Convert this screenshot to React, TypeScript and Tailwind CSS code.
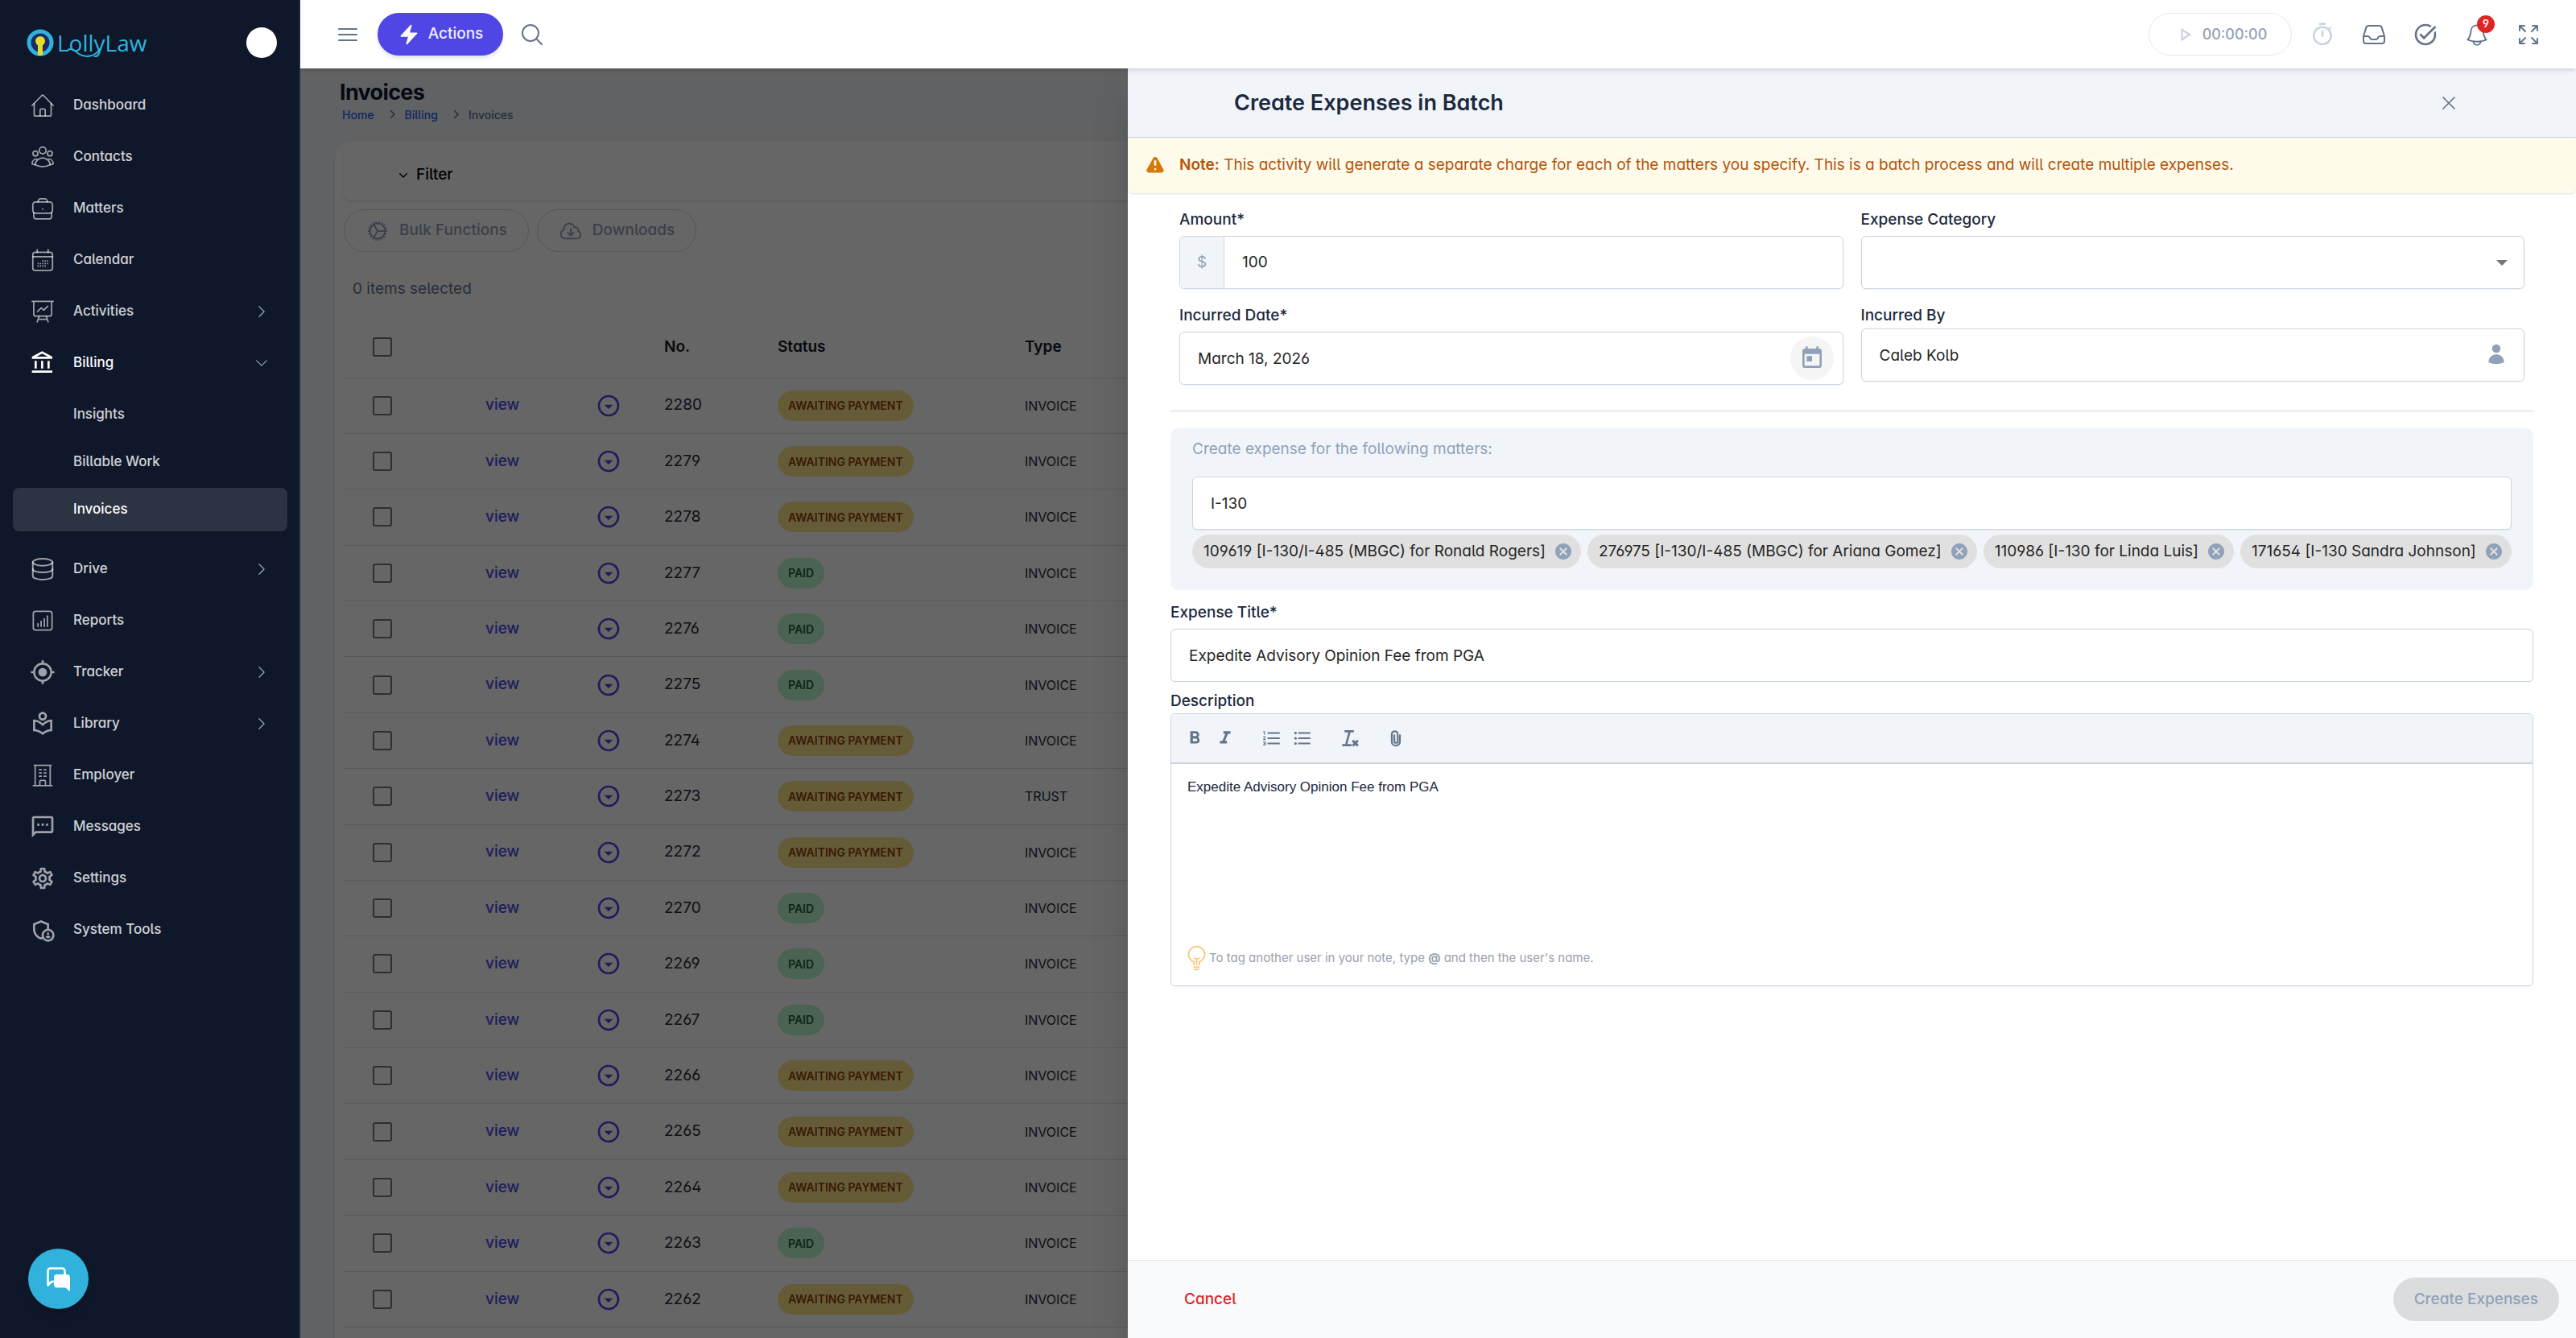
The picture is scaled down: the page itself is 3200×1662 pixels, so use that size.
import React from 'react';
import {
  HiBars3,
  HiBolt,
  HiMiniChevronDown,
  HiMiniChevronRight,
  HiOutlineArrowsPointingOut,
  HiOutlineChevronDown,
  HiOutlineChevronRight,
  HiOutlineCloudArrowDown,
  HiOutlineCog,
  HiOutlineInbox,
  HiOutlineMagnifyingGlass,
  HiOutlineXMark,
  HiUser,
} from 'react-icons/hi2';
import { HiExclamation } from 'react-icons/hi';
import {
  MdCancel,
  MdFormatBold,
  MdFormatItalic,
  MdFormatListBulleted,
  MdFormatListNumbered,
  MdMyLocation,
  MdOutlineAccountBalance,
  MdOutlineAdminPanelSettings,
  MdOutlineArrowDropDownCircle,
  MdOutlineLocalLibrary,
  MdOutlinePlayArrow,
  MdOutlineSettings,
  MdOutlineSms,
  MdOutlineTimer,
  MdTaskAlt,
  MdToday,
} from 'react-icons/md';

type IconProps = { className?: string };

function LineIcon({ className, children }: IconProps & { children: React.ReactNode }) {
  return (
    <svg className={className} viewBox="0 0 24 24" fill="none" stroke="currentColor" strokeWidth="1.5" strokeLinecap="round" strokeLinejoin="round" aria-hidden="true">
      {children}
    </svg>
  );
}

function HomeIcon({ className }: IconProps) {
  return (
    <LineIcon className={className}>
      <path d="M.8 12 11 1.500a1.500 1.500 0 0 1 2 0L23.200 12" />
      <path d="M3 10v12.200c0 .6.4 1 1 1h16c.6 0 1-.4 1-1V10" />
      <path d="M9.300 23v-6.200c0-.6.4-1 1-1h3.400c.6 0 1 .4 1 1V23" />
    </LineIcon>
  );
}

function ContactsIcon({ className }: IconProps) {
  return (
    <LineIcon className={className}>
      <circle cx="12" cy="5" r="3.6" />
      <circle cx="4.3" cy="8.3" r="2.6" />
      <circle cx="19.7" cy="8.3" r="2.6" />
      <path d="M4 20.2c.5-4.300 3.900-7.200 8-7.200s7.500 2.900 8 7.200c-2.200 1.400-5 2.200-8 2.200s-5.800-.8-8-2.200Z" />
      <path d="M5.600 14.300C2.800 14.100.9 16.500.7 19.300c1 .5 2.100.8 3.300.9M18.400 14.300c2.800-.2 4.700 2.200 4.900 5-1 .5-2.100.8-3.300.9" />
    </LineIcon>
  );
}

function BriefcaseIcon({ className }: IconProps) {
  return (
    <LineIcon className={className}>
      <rect x="1.500" y="5" width="21" height="12" rx="3" />
      <path d="M7 5c.3-2.200 1.200-3.500 2.800-3.500h4.400C15.800 1.500 16.700 2.800 17 5" />
      <path d="M2.500 16v4.500c0 1.700 1 2.500 2.500 2.500h14c1.500 0 2.500-.8 2.500-2.500V16M12 12.500v.2" />
    </LineIcon>
  );
}

function CalendarIcon({ className }: IconProps) {
  return (
    <LineIcon className={className}>
      <rect x="1.500" y="3.800" width="21" height="19.200" rx="2.500" />
      <path d="M1.500 8.500h21M6.200 1v2.800M17.800 1v2.800" />
      <path d="M11.500 13h7M6.500 15.700h12M6.500 18.400h9.500" strokeWidth="1.600" strokeDasharray="1.300 1.200" strokeLinecap="butt" />
    </LineIcon>
  );
}

function BoardIcon({ className }: IconProps) {
  return (
    <LineIcon className={className}>
      <path d="M.8 1.200h22.400M2.500 1.200v13.600c0 1.200.8 2 2 2h15c1.200 0 2-.8 2-2V1.200" />
      <path d="m6.500 12 4-4 2.500 2.500 4.500-4.200M8.200 17l-2 6M15.800 17l2 6M7.500 20.300h9" />
    </LineIcon>
  );
}

function DatabaseIcon({ className }: IconProps) {
  return (
    <LineIcon className={className}>
      <g strokeWidth="1.700">
        <ellipse cx="12" cy="4.600" rx="10.500" ry="3.700" />
        <path d="M1.500 4.600v14.800c0 2 4.700 3.700 10.500 3.700s10.500-1.700 10.500-3.700V4.600" />
        <path d="M1.500 12c0 2 4.700 3.500 10.500 3.500S22.500 14 22.500 12" />
      </g>
    </LineIcon>
  );
}

function ReportsIcon({ className }: IconProps) {
  return (
    <LineIcon className={className}>
      <rect x="2" y="2" width="20" height="20" rx="2.500" />
      <path d="M7 18v-3M10.300 18v-5.500M13.700 18v-8M17 18V7" />
    </LineIcon>
  );
}

function BuildingIcon({ className }: IconProps) {
  return (
    <LineIcon className={className}>
      <path d="M2 23h20M3 1.300h18M4 1.300V23M20 1.300V23M9 23v-4.500c0-.6.4-1 1-1h4c.6 0 1 .4 1 1V23" />
      <path d="M8.500 6h2M13.500 6h2M8.500 9.500h2M13.500 9.500h2M8.500 13h2M13.500 13h2" />
    </LineIcon>
  );
}

function BellIcon({ className }: IconProps) {
  return (
    <LineIcon className={className}>
      <g strokeWidth="1.600">
        <path d="M12 2c3.600 0 6.200 2.600 6.500 6.200.3 4 .8 6.300 3.500 9.300-3 1.400-6.400 2-10 2s-7-.6-10-2c2.700-3 3.200-5.300 3.500-9.300C5.800 4.600 8.400 2 12 2Z" />
        <path d="M8.200 19.300c0 2.200 1.700 3.700 3.800 3.700s3.800-1.500 3.800-3.700" />
      </g>
    </LineIcon>
  );
}

function ChatIcon({ className }: IconProps) {
  return (
    <svg className={className} viewBox="0 0 30 30" aria-hidden="true">
      <path d="M9 18H6l-4.500 4.500V4.500a3 3 0 0 1 3-3h15a3 3 0 0 1 3 3V9" fill="none" stroke="white" strokeWidth="2.600" strokeLinejoin="round" strokeLinecap="round" />
      <path d="M13 9h12a4 4 0 0 1 4 4v15.500c0 .8-.9 1.200-1.500.7L23.500 25.500H13a4 4 0 0 1-4-4V13a4 4 0 0 1 4-4Z" fill="white" />
    </svg>
  );
}

function ClearFormatIcon({ className }: IconProps) {
  return (
    <svg className={className} viewBox="0 0 18 18" fill="none" stroke="currentColor" strokeWidth="1.800" aria-hidden="true">
      <path d="M5 3h8M6.500 14 9.500 3M3 15h8" />
      <path d="m12 11 4.500 4.500M16.500 11 12 15.500" strokeWidth="2" />
    </svg>
  );
}

function ClipIcon({ className }: IconProps) {
  return (
    <svg className={className} viewBox="0 0 18 24" fill="none" stroke="currentColor" strokeWidth="2.400" strokeLinecap="round" aria-hidden="true">
      <path d="M14.500 8v8.500a5.500 5.500 0 0 1-11 0v-10a4 4 0 0 1 8 0v9.500a2.300 2.300 0 0 1-4.600 0V8" />
    </svg>
  );
}

function BulbIcon({ className }: IconProps) {
  return (
    <svg className={className} viewBox="0 0 24 32" fill="none" stroke="currentColor" strokeWidth="1.800" strokeLinecap="round" aria-hidden="true">
      <path d="M8.500 24v-3.500C4.500 18.500 1.500 15.500 1.500 11a10.500 10.500 0 0 1 21 0c0 4.500-3 7.500-7 9.500V24M12 24v-7.500M9 15.500l3 1.500 3-1.500M8.500 27.300h7M9.500 30.500h5" />
    </svg>
  );
}

function Logo() {
  return (
    <a href="#" aria-label="LollyLaw home" className="relative flex items-center gap-1 text-[#31b2dc]">
      <svg className="h-[34px] w-[34px]" viewBox="0 0 34 34" aria-hidden="true">
        <circle cx="17" cy="17" r="14" fill="#1e2a63" stroke="#31b2dc" strokeWidth="5" />
        <circle cx="17" cy="15" r="6" fill="#e3dc2b" />
        <path d="M14 19h6v14h-6z" fill="#e3dc2b" />
      </svg>
      <span className="font-['Open_Sans',sans-serif] text-[28px] leading-[36px]">LollyLaw</span>
      <svg className="absolute top-[23px] left-[50px] h-[14px] w-[44px]" viewBox="0 0 44 14" fill="none" stroke="currentColor" strokeWidth="2" aria-hidden="true">
        <path d="M1 4c6-3 9 1 14 5 8 5 20 4 27-7" />
      </svg>
    </a>
  );
}

const topNav = [
  { label: 'Dashboard', icon: HomeIcon },
  { label: 'Contacts', icon: ContactsIcon },
  { label: 'Matters', icon: BriefcaseIcon },
  { label: 'Calendar', icon: CalendarIcon },
  { label: 'Activities', icon: BoardIcon, expandable: true },
];

const bottomNav = [
  { label: 'Drive', icon: DatabaseIcon, expandable: true },
  { label: 'Reports', icon: ReportsIcon },
  { label: 'Tracker', icon: MdMyLocation, iconSize: 'h-8 w-8', expandable: true },
  { label: 'Library', icon: MdOutlineLocalLibrary, iconSize: 'h-8 w-8', expandable: true },
  { label: 'Employer', icon: BuildingIcon },
  { label: 'Messages', icon: MdOutlineSms, iconSize: 'h-8 w-8' },
  { label: 'Settings', icon: MdOutlineSettings, iconSize: 'h-8 w-8' },
  { label: 'System Tools', icon: MdOutlineAdminPanelSettings, iconSize: 'h-8 w-8' },
];

const billingNav = [{ label: 'Insights' }, { label: 'Billable Work' }, { label: 'Invoices', active: true }];

const invoices = [
  { no: '2280', paid: false, type: 'INVOICE' },
  { no: '2279', paid: false, type: 'INVOICE' },
  { no: '2278', paid: false, type: 'INVOICE' },
  { no: '2277', paid: true, type: 'INVOICE' },
  { no: '2276', paid: true, type: 'INVOICE' },
  { no: '2275', paid: true, type: 'INVOICE' },
  { no: '2274', paid: false, type: 'INVOICE' },
  { no: '2273', paid: false, type: 'TRUST' },
  { no: '2272', paid: false, type: 'INVOICE' },
  { no: '2270', paid: true, type: 'INVOICE' },
  { no: '2269', paid: true, type: 'INVOICE' },
  { no: '2267', paid: true, type: 'INVOICE' },
  { no: '2266', paid: false, type: 'INVOICE' },
  { no: '2265', paid: false, type: 'INVOICE' },
  { no: '2264', paid: false, type: 'INVOICE' },
  { no: '2263', paid: true, type: 'INVOICE' },
  { no: '2262', paid: false, type: 'INVOICE' },
];

const matters = [
  '109619 [I-130/I-485 (MBGC) for Ronald Rogers]',
  '276975 [I-130/I-485 (MBGC) for Ariana Gomez]',
  '110986 [I-130 for Linda Luis]',
  '171654 [I-130 Sandra Johnson]',
];

type NavItemProps = {
  label: string;
  icon: React.ComponentType<IconProps>;
  iconSize?: string;
  expandable?: boolean;
};

function NavItem({ label, icon: Icon, iconSize = 'h-7 w-7', expandable }: NavItemProps) {
  return (
    <li>
      <a href="#" className="flex h-[60px] items-center text-white/80">
        <span className="flex w-7 justify-center text-white/60">
          <Icon className={`${iconSize} shrink-0`} />
        </span>
        <span className="ml-6 flex-1">{label}</span>
        {expandable && <HiOutlineChevronRight className="h-5 w-5 text-slate-400" />}
      </a>
    </li>
  );
}

function Sidebar() {
  return (
    <aside className="z-30 flex w-[373px] shrink-0 flex-col border-r-2 border-slate-800 bg-[#0f172a] text-[17px] font-medium">
      <div className="flex h-[101px] shrink-0 items-center justify-between pt-1 pr-[27px] pl-[33px]">
        <Logo />
        <button aria-label="Account" className="h-[38px] w-[38px] rounded-full bg-white" />
      </div>
      <nav className="flex-1">
        <ul className="flex flex-col gap-1 pr-9 pl-[39px]">
          {topNav.map((item) => (
            <NavItem key={item.label} {...item} />
          ))}
          <li>
            <a href="#" className="flex h-[60px] items-center text-white">
              <span className="flex w-7 justify-center">
                <MdOutlineAccountBalance className="h-8 w-8 shrink-0" />
              </span>
              <span className="ml-6 flex-1">Billing</span>
              <HiOutlineChevronDown className="h-5 w-5 text-slate-400" />
            </a>
          </li>
        </ul>
        <ul className="flex flex-col gap-[5px] pt-[7px] pr-[14px] pb-[17px] pl-4">
          {billingNav.map((item) => (
            <li key={item.label}>
              <a
                href="#"
                className={
                  item.active
                    ? 'flex h-[54px] items-center rounded-lg bg-white/12 pl-[75px] text-white'
                    : 'flex h-[54px] items-center rounded-lg pl-[75px] text-white/80'
                }
              >
                {item.label}
              </a>
            </li>
          ))}
        </ul>
        <ul className="flex flex-col gap-1 pr-9 pl-[39px]">
          {bottomNav.map((item) => (
            <NavItem key={item.label} {...item} />
          ))}
        </ul>
      </nav>
      <div className="px-[35px] pb-9">
        <button aria-label="Open chat" className="flex h-[75px] w-[75px] items-center justify-center rounded-full bg-[#31b2dc] shadow-lg">
          <ChatIcon className="h-[30px] w-[30px]" />
        </button>
      </div>
    </aside>
  );
}

function Header() {
  return (
    <header className="z-20 flex h-[85px] shrink-0 items-center bg-white pr-[27px] pl-[43px] text-[#64748b] shadow-md">
      <button aria-label="Toggle navigation" className="flex h-8 w-8 items-center justify-center">
        <HiBars3 className="h-8 w-8" />
      </button>
      <button className="ml-[21px] flex h-[53px] w-[156px] items-center justify-center gap-[10px] rounded-full bg-[#4f46e5] text-[19px] font-medium text-indigo-50 shadow-md">
        <HiBolt className="h-7 w-7 text-white" />
        Actions
      </button>
      <button aria-label="Search" className="ml-5 flex h-8 w-8 items-center justify-center">
        <HiOutlineMagnifyingGlass className="h-8 w-8" />
      </button>
      <div className="ml-auto flex items-center">
        <button className="mr-[6px] flex h-[53px] w-[178px] items-center justify-center gap-2 rounded-full border border-slate-200 text-[18px] font-medium text-slate-400">
          <MdOutlinePlayArrow className="h-7 w-7 text-slate-300" />
          00:00:00
        </button>
        <button aria-label="Timers" className="flex w-16 justify-center text-slate-300">
          <MdOutlineTimer className="h-8 w-8" />
        </button>
        <button aria-label="Inbox" className="flex w-16 justify-center">
          <HiOutlineInbox className="h-8 w-8" />
        </button>
        <button aria-label="Tasks" className="flex w-16 justify-center">
          <MdTaskAlt className="h-8 w-8" />
        </button>
        <button aria-label="Notifications" className="relative flex w-16 justify-center">
          <BellIcon className="h-7 w-7" />
          <span className="absolute -top-[10px] right-[10px] flex h-[22px] w-[22px] items-center justify-center rounded-full bg-[#dc2626] text-[13px] font-semibold text-white">
            9
          </span>
        </button>
        <button aria-label="Full screen" className="flex w-16 justify-center">
          <HiOutlineArrowsPointingOut className="h-8 w-8" />
        </button>
      </div>
    </header>
  );
}

function Checkbox({ label }: { label: string }) {
  return (
    <input
      type="checkbox"
      aria-label={label}
      className="block h-6 w-6 appearance-none rounded-[3px] border-2 border-[#757575]"
    />
  );
}

function InvoicesPage() {
  return (
    <main className="h-full bg-slate-100 pl-[43px]">
      <h1 className="pt-[13px] pl-[6px] text-[27px] leading-[34px] font-bold tracking-tight text-slate-900">Invoices</h1>
      <nav aria-label="Breadcrumb" className="flex h-5 items-center pl-[9px] text-[14px] font-medium text-[#2563eb]">
        <a href="#">Home</a>
        <HiMiniChevronRight className="mr-[6px] ml-3 h-5 w-5 text-slate-500" />
        <a href="#">Billing</a>
        <HiMiniChevronRight className="mr-[6px] ml-3 h-5 w-5 text-slate-500" />
        <span className="text-slate-500">Invoices</span>
      </nav>
      <section className="mt-[23px] rounded-tl-[20px] bg-white pt-[10px] pb-20 pl-[11px] shadow">
        <button className="flex h-16 w-full items-center gap-[6px] rounded-lg pl-16 text-[19px] font-medium text-black shadow">
          <HiMiniChevronDown className="h-5 w-5" />
          Filter
        </button>
        <div className="mt-[11px] flex gap-[10px] text-[19px] font-medium text-slate-400">
          <button disabled className="flex h-[53px] items-center gap-3 rounded-full border border-slate-300 px-[26px]">
            <HiOutlineCog className="h-[30px] w-[30px]" />
            Bulk Functions
          </button>
          <button disabled className="flex h-[53px] items-center gap-3 rounded-full border border-slate-300 px-[26px]">
            <HiOutlineCloudArrowDown className="h-[30px] w-[30px]" />
            Downloads
          </button>
        </div>
        <p className="mt-[30px] pl-[11px] text-[19px] leading-[32px] text-slate-500">0 items selected</p>
        <table className="mt-[18px] h-[1256px] w-full table-fixed text-left text-[19px] text-slate-800">
          <thead>
            <tr className="h-[76px] border-b border-[#e0e0e0] text-slate-900">
              <th className="w-[176px] pl-9"><Checkbox label="Select all" /></th>
              <th className="w-[137px]" />
              <th className="w-[85px]" />
              <th className="w-[141px] font-semibold">No.</th>
              <th className="w-[307px] font-semibold">Status</th>
              <th className="font-semibold">Type</th>
            </tr>
          </thead>
          <tbody>
            {invoices.map((invoice) => (
              <tr key={invoice.no} className="h-[69px] border-b border-[#e0e0e0]">
                <td className="pl-9"><Checkbox label={`Select invoice ${invoice.no}`} /></td>
                <td><a href="#" className="font-medium text-[#4f46e5]">view</a></td>
                <td>
                  <button aria-label={`Options for ${invoice.no}`} className="block text-[#4f46e5]">
                    <MdOutlineArrowDropDownCircle className="h-8 w-8" />
                  </button>
                </td>
                <td>{invoice.no}</td>
                <td>
                  {invoice.paid ? (
                    <span className="inline-flex h-[38px] items-center rounded-full bg-[#bbf7d0] px-[13px] text-[14px] font-semibold text-[#166534]">PAID</span>
                  ) : (
                    <span className="inline-flex h-[38px] items-center rounded-full bg-[#fde68a] px-[13px] text-[14px] font-semibold text-[#92400e]">AWAITING PAYMENT</span>
                  )}
                </td>
                <td className="text-[16px]">{invoice.type}</td>
              </tr>
            ))}
          </tbody>
        </table>
      </section>
    </main>
  );
}

function ExpenseDrawer() {
  const field = 'h-[66px] w-full rounded-md border border-slate-300 bg-white px-[22px] text-[19px] text-neutral-800 shadow-xs outline-none';
  const label = 'block text-[19px] leading-6 font-medium text-slate-800';

  return (
    <section aria-label="Create Expenses in Batch" className="absolute inset-y-0 right-0 flex w-7/11 flex-col bg-white shadow-2xl">
      <div className="flex h-[86px] shrink-0 items-center justify-between border-b border-slate-300 bg-slate-100 pr-[144px] pl-[132px]">
        <h2 className="text-[27px] leading-8 font-semibold text-slate-800">Create Expenses in Batch</h2>
        <button aria-label="Close" className="text-[#64748b]">
          <HiOutlineXMark className="h-7 w-7" />
        </button>
      </div>
      <div className="flex h-[69px] shrink-0 items-center gap-4 rounded-md bg-amber-50 px-5 text-[19px] text-[#b45309] shadow">
        <HiExclamation className="h-7 w-7 text-[#d97706]" />
        <p>
          <strong className="font-semibold">Note:</strong> This activity will generate a separate charge for each of the matters you specify. This is a batch process and will create multiple expenses.
        </p>
      </div>

      <form className="flex-1 px-[53px] pt-[21px]">
        <div className="grid grid-cols-2 gap-x-[22px] gap-y-[21px] px-[11px]">
          <div>
            <label htmlFor="amount" className={label}>Amount*</label>
            <div className="mt-2 flex h-[66px] overflow-hidden rounded-md border border-slate-300 shadow-xs">
              <span className="flex w-[55px] items-center justify-center border-r border-slate-300 bg-slate-100 text-[19px] text-slate-400">$</span>
              <input id="amount" defaultValue="100" className="min-w-0 flex-1 px-[22px] text-[19px] text-neutral-800 outline-none" />
            </div>
          </div>
          <div>
            <label htmlFor="category" className={label}>Expense Category</label>
            <div className="relative mt-2">
              <select id="category" className={`${field} appearance-none`}>
                <option></option>
              </select>
              <span className="pointer-events-none absolute top-[30px] right-[21px] border-x-[7px] border-t-[7px] border-x-transparent border-t-[#757575]" />
            </div>
          </div>
          <div>
            <label htmlFor="date" className={label}>Incurred Date*</label>
            <div className="relative mt-2">
              <input id="date" defaultValue="March 18, 2026" className={field} />
              <button type="button" aria-label="Open calendar" className="absolute top-[6px] right-3 flex h-[54px] w-[54px] items-center justify-center rounded-full bg-neutral-100 text-slate-400">
                <MdToday className="h-8 w-8" />
              </button>
            </div>
          </div>
          <div>
            <label htmlFor="incurred-by" className={label}>Incurred By</label>
            <div className="relative mt-1">
              <input id="incurred-by" defaultValue="Caleb Kolb" className={field} />
              <HiUser className="absolute top-[18px] right-[21px] h-7 w-7 text-slate-400" />
            </div>
          </div>
        </div>

        <hr className="mt-8 border-neutral-300" />

        <div className="mt-[21px] rounded-[10px] bg-slate-100 px-[27px] pt-[14px] pb-[27px]">
          <label htmlFor="matters" className="block text-[19px] leading-6 text-slate-400">Create expense for the following matters:</label>
          <input id="matters" defaultValue="I-130" className={`${field} mt-[22px]`} />
          <ul className="mt-[6px] flex flex-wrap gap-2">
            {matters.map((matter) => (
              <li key={matter} className="flex h-[42px] items-center gap-[10px] rounded-full bg-[#e0e0e0] pr-[10px] pl-[14px] text-[19px] text-neutral-800">
                {matter}
                <button type="button" aria-label={`Remove ${matter}`} className="text-slate-400">
                  <MdCancel className="h-6 w-6" />
                </button>
              </li>
            ))}
          </ul>
        </div>

        <label htmlFor="title" className={`${label} mt-4`}>Expense Title*</label>
        <input id="title" defaultValue="Expedite Advisory Opinion Fee from PGA" className={`${field} mt-2`} />

        <label htmlFor="description" className={`${label} mt-3`}>Description</label>
        <div className="mt-[3px] overflow-hidden rounded-md border border-slate-300 shadow-xs">
          <div className="flex h-[62px] items-center border-b-2 border-slate-300 bg-slate-100 pl-4 text-[#64748b]">
            <button type="button" aria-label="Bold"><MdFormatBold className="h-[26px] w-[26px]" /></button>
            <button type="button" aria-label="Italic" className="ml-3"><MdFormatItalic className="h-[26px] w-[26px]" /></button>
            <button type="button" aria-label="Numbered list" className="ml-8"><MdFormatListNumbered className="h-[26px] w-[26px]" /></button>
            <button type="button" aria-label="Bulleted list" className="ml-3"><MdFormatListBulleted className="h-[26px] w-[26px]" /></button>
            <button type="button" aria-label="Clear formatting" className="ml-8"><ClearFormatIcon className="h-[26px] w-[26px]" /></button>
            <button type="button" aria-label="Attach file" className="ml-8"><ClipIcon className="h-[22px] w-[26px]" /></button>
          </div>
          <textarea
            id="description"
            defaultValue="Expedite Advisory Opinion Fee from PGA"
            className="block h-[226px] w-full resize-none px-5 pt-[17px] font-['Liberation_Sans',sans-serif] text-[17px] leading-6 text-slate-800 outline-none"
          />
          <div className="flex h-[49px] items-start gap-1 pl-5 text-[15px] leading-[30px] text-gray-400">
            <BulbIcon className="h-[31px] w-[23px] text-[#fcc678]" />
            <p>To tag another user in your note, type <strong>@</strong> and then the user's name.</p>
          </div>
        </div>
      </form>

      <div className="flex h-[97px] shrink-0 items-center justify-between border-t border-slate-200 bg-slate-50 pr-[21px] pl-[70px] text-[19px] font-medium">
        <button className="text-[#dc2626]">Cancel</button>
        <button disabled className="h-[54px] rounded-full bg-[#dbdcde] px-[26px] text-slate-400">Create Expenses</button>
      </div>
    </section>
  );
}

export default function App() {
  return (
    <div className="flex h-screen overflow-hidden font-['Inter',sans-serif] [font-feature-settings:'cv02','cv03','cv04','cv05','cv11']">
      <Sidebar />
      <div className="flex min-w-0 flex-1 flex-col">
        <Header />
        <div className="relative min-h-0 flex-1 overflow-hidden">
          <InvoicesPage />
          <div className="absolute inset-0 bg-black/60" />
          <ExpenseDrawer />
        </div>
      </div>
    </div>
  );
}
